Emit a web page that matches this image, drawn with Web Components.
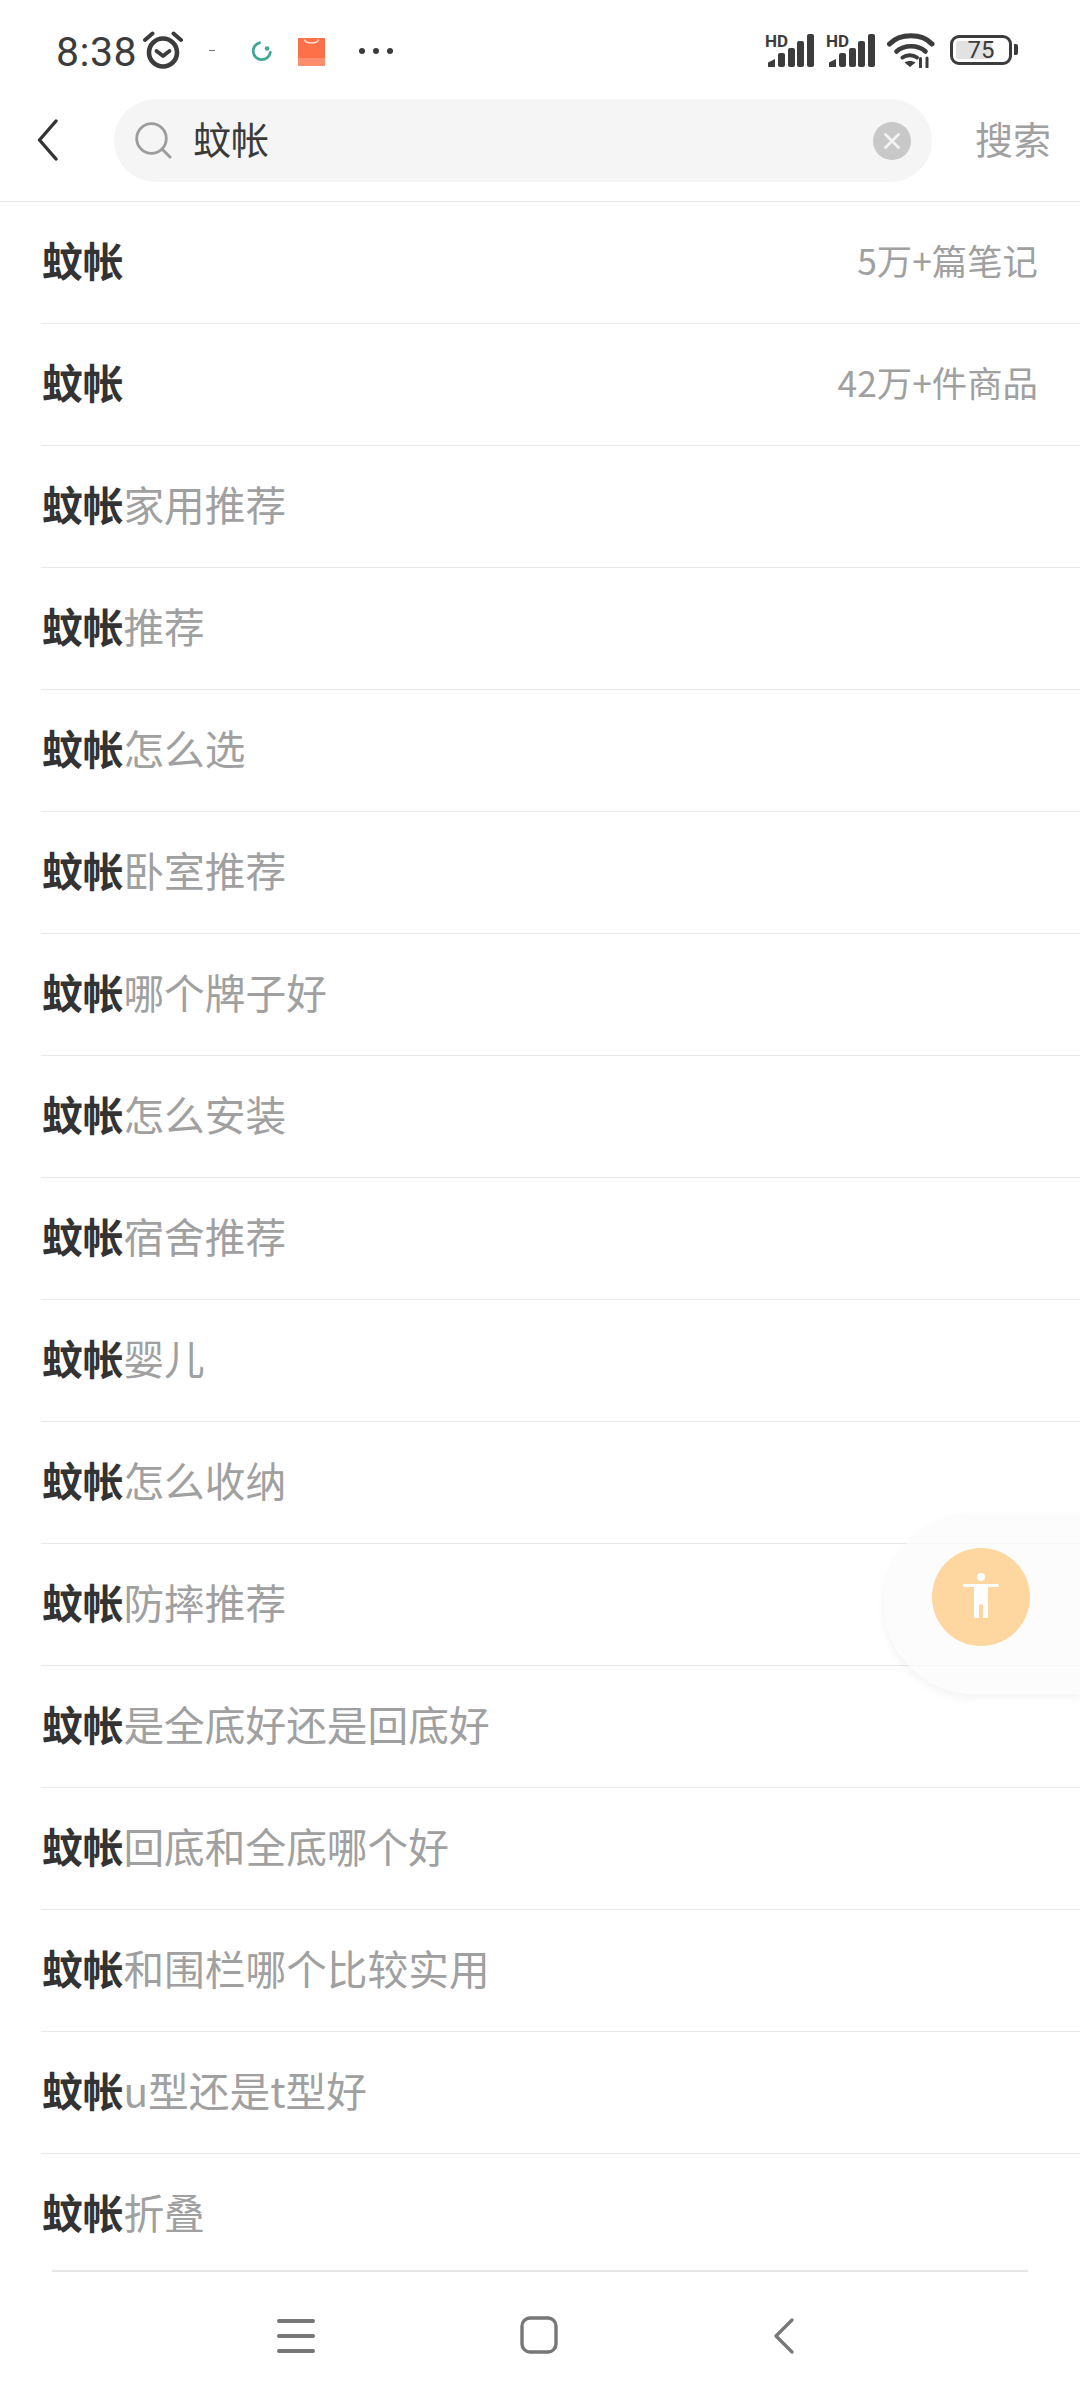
<!DOCTYPE html>
<html lang="zh">
<head>
<meta charset="utf-8">
<title>蚊帐</title>
<style>
  html, body { margin: 0; padding: 0; background: #fff; }
  body { font-family: "Noto Sans CJK SC", "Noto Sans", sans-serif; }
</style>
</head>
<body>
<app-screen>
  <status-bar slot="top"></status-bar>
  <search-header slot="top" query="蚊帐" action="搜索"></search-header>

  <suggest-row>蚊帐<span slot="meta">5万+篇笔记</span></suggest-row>
  <suggest-row>蚊帐<span slot="meta">42万+件商品</span></suggest-row>
  <suggest-row rest="家用推荐">蚊帐</suggest-row>
  <suggest-row rest="推荐">蚊帐</suggest-row>
  <suggest-row rest="怎么选">蚊帐</suggest-row>
  <suggest-row rest="卧室推荐">蚊帐</suggest-row>
  <suggest-row rest="哪个牌子好">蚊帐</suggest-row>
  <suggest-row rest="怎么安装">蚊帐</suggest-row>
  <suggest-row rest="宿舍推荐">蚊帐</suggest-row>
  <suggest-row rest="婴儿">蚊帐</suggest-row>
  <suggest-row rest="怎么收纳">蚊帐</suggest-row>
  <suggest-row rest="防摔推荐">蚊帐</suggest-row>
  <suggest-row rest="是全底好还是回底好">蚊帐</suggest-row>
  <suggest-row rest="回底和全底哪个好">蚊帐</suggest-row>
  <suggest-row rest="和围栏哪个比较实用">蚊帐</suggest-row>
  <suggest-row rest="u型还是t型好">蚊帐</suggest-row>
  <suggest-row rest="折叠" last>蚊帐</suggest-row>

  <float-button slot="over"></float-button>
  <nav-bar slot="bottom"></nav-bar>
</app-screen>

<script>
// page frame: top bars, the list, bottom bar
class AppScreen extends HTMLElement {
  constructor() {
    super();
    this.attachShadow({ mode: "open" }).innerHTML = `
      <style>
        :host { display: flex; flex-direction: column; width: 1080px; height: 2400px; position: relative; overflow: hidden; background: #fff; }
        main { flex: 1; min-height: 0; display: flex; flex-direction: column; }
      </style>
      <slot name="top"></slot>
      <main><slot></slot></main>
      <slot name="bottom"></slot>
      <slot name="over"></slot>`;
  }
}

class StatusBar extends HTMLElement {
  constructor() {
    super();
    const signal = `
      <svg width="49" height="36" viewBox="0 0 49 36">
        <text x="0" y="15" font-family="Roboto, sans-serif" font-weight="700" font-size="17" fill="#3c3c3c">HD</text>
        <g fill="#3c3c3c">
          <path d="M3 35v-4.500l7-3.500v8z"/>
          <rect x="13" y="21" width="7" height="14" rx="2"/>
          <rect x="23" y="16" width="7" height="19" rx="2"/>
          <rect x="32" y="9" width="7" height="26" rx="2"/>
          <rect x="42" y="2" width="7" height="33" rx="2"/>
        </g>
      </svg>`;
    this.attachShadow({ mode: "open" }).innerHTML = `
      <style>
        :host { display: flex; align-items: center; height: 99px; padding: 0 62px 0 56px; box-sizing: border-box; color: #3c3c3c; }
        .time { font: 400 41px/1 Roboto, sans-serif; letter-spacing: .5px; width: 87px; padding-top: 6px; }
        svg { display: block; flex: none; }
        .left { display: flex; align-items: center; }
        .right { margin-left: auto; display: flex; align-items: center; }
        .batt { position: relative; width: 62px; height: 30px; border: 3px solid #3c3c3c; border-radius: 9px; box-sizing: border-box; margin-left: 15px; display: flex; align-items: center; justify-content: center; }
        .batt i { position: absolute; left: 3px; top: 3px; bottom: 3px; width: 36px; background: #e2e2e2; border-radius: 2px; }
        .batt span { position: relative; font: 400 24px/1 Roboto, sans-serif; }
        .nub { width: 4px; height: 11px; background: #3c3c3c; border-radius: 0 2px 2px 0; margin-left: 2px; }
      </style>
      <div class="left">
        <span class="time">8:38</span>
        <svg width="40" height="38" viewBox="0 0 40 38" fill="none" stroke="#3c3c3c">
          <circle cx="20" cy="21.500" r="14" stroke-width="4.600"/>
          <path d="M13.500 20l6.500 5 6.500-5" stroke-width="3.800" stroke-linecap="round" stroke-linejoin="round"/>
          <path d="M2 9 9.500 2.500M38 9 30.500 2.500" stroke-width="4" stroke-linecap="round"/>
        </svg>
        <svg style="margin-left:25px" width="8" height="4" viewBox="0 0 8 4"><path d="M1 2.500h6" stroke="#777" stroke-width="1"/></svg>
        <svg style="margin-left:35px;margin-top:4px" width="21" height="21" viewBox="0 0 21 21" fill="none">
          <path d="M8.500 1.800a8.600 8.600 0 1 0 10.800 9.700" stroke="#3fa996" stroke-width="2.800" stroke-linecap="round"/>
          <circle cx="16" cy="7.500" r="2.300" fill="#3fa996"/>
        </svg>
        <svg style="margin-left:26px;margin-top:4px" width="27" height="28" viewBox="0 0 27 28">
          <rect width="27" height="28" fill="#fd7148"/>
          <rect y="20" width="27" height="8" fill="#fc8e6e"/>
          <path d="M6.500 1.500c1 4.500 13 4.500 14 0" fill="none" stroke="#ffe3d8" stroke-width="1.300"/>
        </svg>
        <svg style="margin-left:33px;margin-top:3px" width="36" height="8" viewBox="0 0 36 8" fill="#3c3c3c">
          <circle cx="4" cy="4" r="3"/><circle cx="18" cy="4" r="3"/><circle cx="32" cy="4" r="3"/>
        </svg>
      </div>
      <div class="right">
        ${signal}
        <span style="width:12px"></span>
        ${signal}
        <svg style="margin-left:12px" width="48" height="36" viewBox="0 0 48 36" fill="none" stroke="#3c3c3c" stroke-linecap="round">
          <path d="M2.500 12C13 1 35 1 45 12" stroke-width="5"/>
          <path d="M9.500 19.500c7.500-7 21.500-7 29 0" stroke-width="4.600"/>
          <path d="M15.500 25.500c4-3 10.500-3 14.500 0" stroke-width="4"/>
          <path d="M23 35l-5.500-4.500c3-2 8-2 11 0z" fill="#3c3c3c" stroke="none"/>
          <path d="M33.500 35v-8.500M40 35v-9" stroke-width="3"/>
        </svg>
        <div class="batt"><i></i><span>75</span></div>
        <div class="nub"></div>
      </div>`;
  }
}

class SearchHeader extends HTMLElement {
  constructor() {
    super();
    this.attachShadow({ mode: "open" }).innerHTML = `
      <style>
        :host { display: flex; align-items: center; height: 103px; padding: 0 30px 19px 37px; box-sizing: border-box; border-bottom: 1px solid #e8e8e8; }
        .back { flex: none; width: 77px; margin-top: -2px; }
        .pill { flex: none; width: 818px; height: 83px; border-radius: 42px; background: #f5f5f5; display: flex; align-items: center; padding: 0 21px 0 21px; box-sizing: border-box; }
        .q { margin-left: 21px; font-size: 38px; line-height: 1; color: #3a3a3a; padding-bottom: 5px; }
        .clear { margin-left: auto; }
        .act { margin-left: 43px; font-size: 38px; line-height: 1; color: #a0a0a0; white-space: nowrap; padding-bottom: 5px; }
        svg { display: block; }
      </style>
      <div class="back">
        <svg width="21" height="42" viewBox="0 0 21 42" fill="none"><path d="M19 2 2.500 21 19 40" stroke="#333" stroke-width="3.400" stroke-linecap="round" stroke-linejoin="round"/></svg>
      </div>
      <div class="pill">
        <svg width="37" height="37" viewBox="0 0 37 37" fill="none" stroke="#9c9c9c">
          <circle cx="16.500" cy="16.500" r="14.800" stroke-width="2.800"/>
          <path d="M27.500 27.500 35 35" stroke-width="3" stroke-linecap="round"/>
        </svg>
        <span class="q">${this.getAttribute("query")}</span>
        <svg class="clear" width="38" height="38" viewBox="0 0 38 38">
          <circle cx="19" cy="19" r="19" fill="#c8c8c8"/>
          <path d="M12.500 12.500l13 13M25.500 12.500l-13 13" stroke="#f4f4f4" stroke-width="2.800" stroke-linecap="round"/>
        </svg>
      </div>
      <span class="act">${this.getAttribute("action")}</span>`;
  }
}

class SuggestRow extends HTMLElement {
  constructor() {
    super();
    const rest = this.getAttribute("rest") || "";
    this.attachShadow({ mode: "open" }).innerHTML = `
      <style>
        :host { display: flex; align-items: center; flex: none; height: 122px; margin-left: 41px; padding: 0 42px 0 1px; box-sizing: border-box; border-bottom: 1px solid #e8e8e8; }
        :host([last]) { border-bottom: 0; height: 116px; }
        .t { font-size: 40.700px; line-height: 1; white-space: nowrap; color: #a0a0a0; padding-bottom: 5px; }
        :host([last]) .t { padding-bottom: 0; }
        b { font-weight: 700; color: #333; }
        .m { margin-left: auto; font-size: 35.400px; color: #a0a0a0; line-height: 1; white-space: nowrap; padding-bottom: 5px; }
      </style>
      <span class="t"><b><slot></slot></b>${rest}</span>
      <span class="m"><slot name="meta"></slot></span>`;
  }
}

// only this floats over the list
class FloatButton extends HTMLElement {
  constructor() {
    super();
    this.attachShadow({ mode: "open" }).innerHTML = `
      <style>
        :host { position: absolute; left: 884px; top: 1513px; width: 196px; height: 181px; box-sizing: border-box; background: rgba(251,251,251,.78); border-radius: 90px 0 0 90px; box-shadow: 0 4px 8px rgba(0,0,0,.05); display: flex; align-items: flex-start; padding: 35px 0 0 48px; }
        .c { width: 98px; height: 98px; border-radius: 50%; background: #fdd79f; display: flex; align-items: center; justify-content: center; }
        svg { display: block; margin-top: -2px; }
      </style>
      <div class="c">
        <svg width="36" height="46" viewBox="0 0 36 46" fill="#fff">
          <circle cx="18" cy="4" r="4"/>
          <rect x="0" y="11" width="36" height="3" rx="1.500"/>
          <path d="M11 12h14v33h-5V31.500h-4V45h-5z"/>
        </svg>
      </div>`;
  }
}

class NavBar extends HTMLElement {
  constructor() {
    super();
    this.attachShadow({ mode: "open" }).innerHTML = `
      <style>
        :host { display: block; flex: none; height: 130px; box-sizing: border-box; padding: 0 52px; }
        .in { border-top: 2px solid #e6e6e6; height: 100%; box-sizing: border-box; padding: 46px 0 0 225px; display: flex; align-items: flex-start; }
        svg { display: block; flex: none; }
      </style>
      <div class="in">
        <svg width="38" height="36" viewBox="0 0 38 36" fill="none" stroke="#777" stroke-width="4" stroke-linecap="round"><path d="M2 3h34M2 18h34M2 33h34"/></svg>
        <svg style="margin-left:205px;margin-top:-2px" width="38" height="38" viewBox="0 0 38 38" fill="none"><rect x="2" y="2" width="34" height="34" rx="8" stroke="#777" stroke-width="3.400"/></svg>
        <svg style="margin-left:215px" width="21" height="36" viewBox="0 0 21 36" fill="none"><path d="M19 2 3 18l16 16" stroke="#777" stroke-width="3.200" stroke-linecap="round" stroke-linejoin="round"/></svg>
      </div>`;
  }
}

customElements.define("app-screen", AppScreen);
customElements.define("status-bar", StatusBar);
customElements.define("search-header", SearchHeader);
customElements.define("suggest-row", SuggestRow);
customElements.define("float-button", FloatButton);
customElements.define("nav-bar", NavBar);
</script>
</body>
</html>
